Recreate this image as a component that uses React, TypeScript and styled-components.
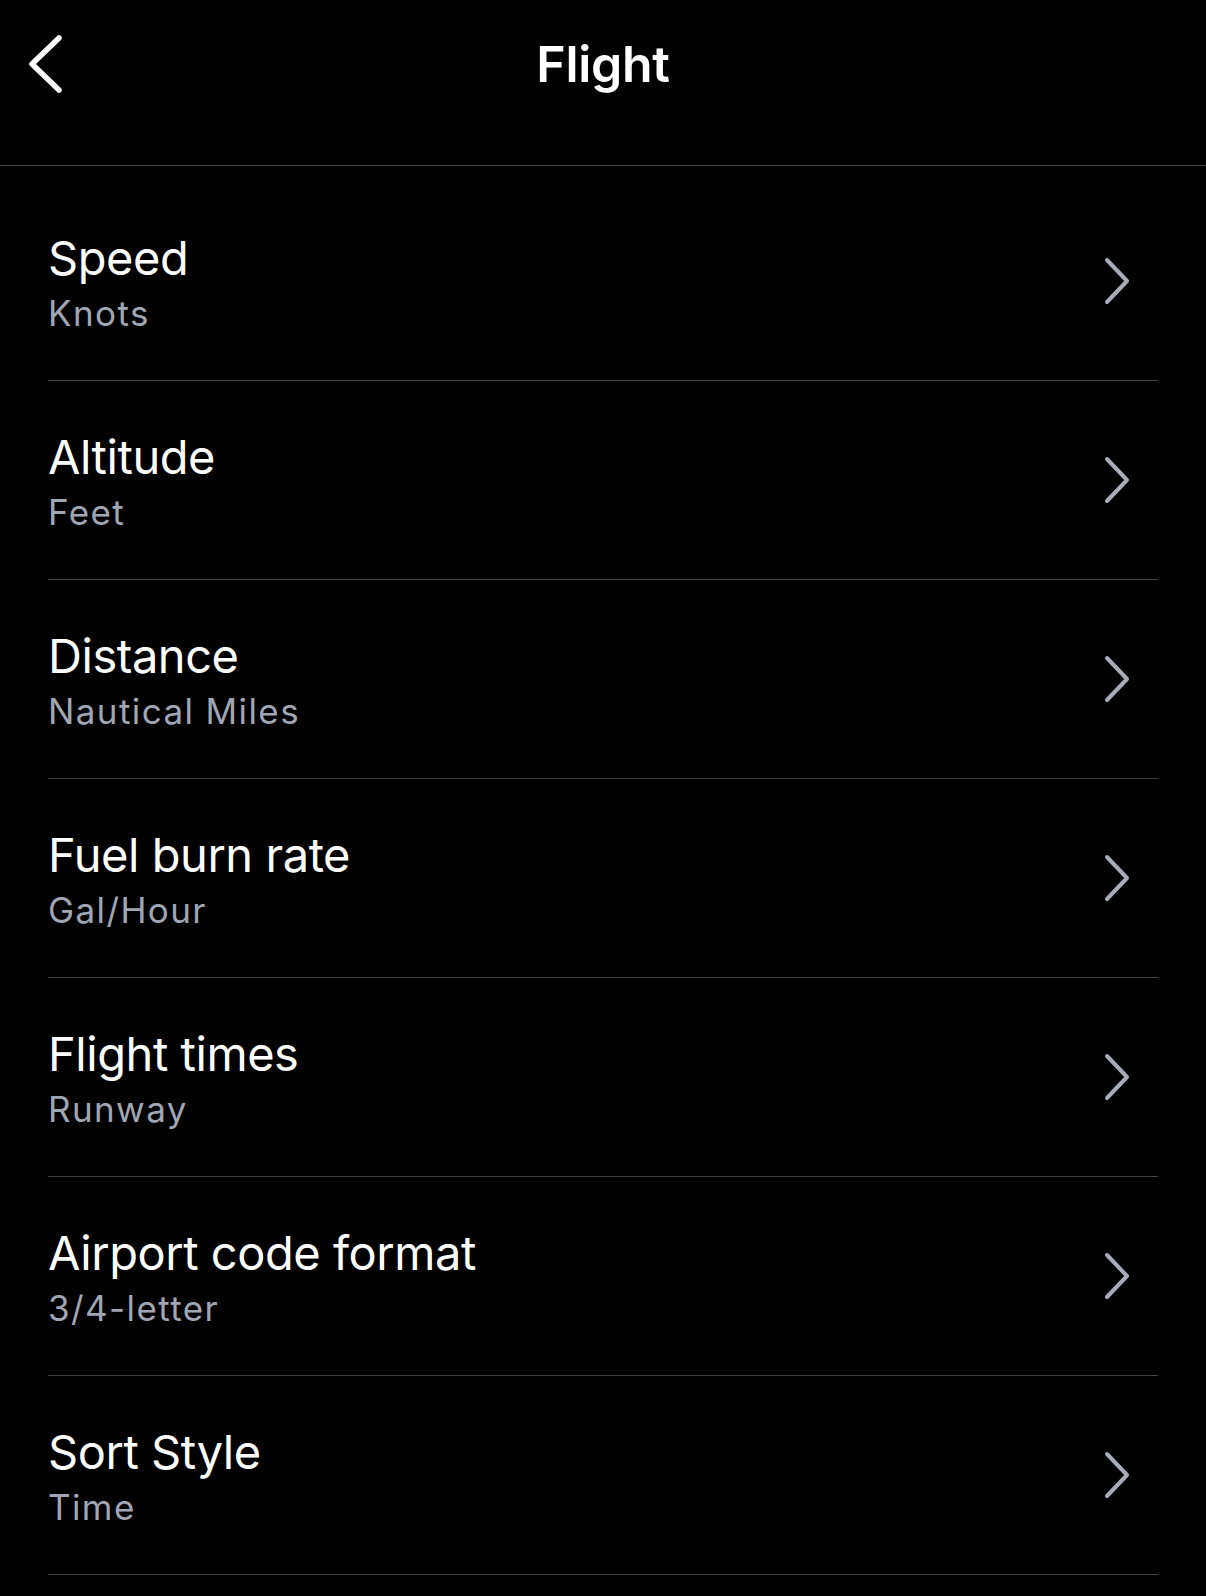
import styled, { createGlobalStyle } from 'styled-components';

const GlobalStyle = createGlobalStyle`
    html, body {
        margin: 0;
        padding: 0;
        background: #000;
    }
    body {
        font-family: Inter, "Noto Sans", "Liberation Sans", sans-serif;
        color: #fff;
        -webkit-font-smoothing: antialiased;
    }
`;

const Page = styled.div`
    width: 1206px;
    min-height: 1596px;
    background: #000;
    display: flex;
    flex-direction: column;
`;

const NavBar = styled.header`
    height: 165px;
    display: grid;
    grid-template-columns: 120px 1fr 120px;
    align-items: start;
    border-bottom: 1px solid #444449;
`;

const BackButton = styled.button`
    background: none;
    border: 0;
    padding: 0;
    margin: 33px 0 0 25px;
    width: 40px;
    height: 62px;
    display: flex;
    align-items: center;
    justify-content: center;
    cursor: pointer;
`;

const Title = styled.h1`
    margin: 33px 0 0;
    text-align: center;
    font-size: 50px;
    line-height: 62px;
    font-weight: 600;
    letter-spacing: -0.3px;
`;

const List = styled.ul`
    list-style: none;
    margin: 0;
    padding: 16px 48px 0;
`;

const Row = styled.li`
    height: 198px;
    display: flex;
    align-items: center;
    justify-content: space-between;
    border-bottom: 1px solid #3d3d42;
`;

const Labels = styled.div`
    display: flex;
    flex-direction: column;
    padding-top: 2px;
`;

const Label = styled.span`
    font-size: 47px;
    line-height: 56px;
    font-weight: 400;
    letter-spacing: -0.45px;
`;

const Value = styled.span`
    margin-top: 5px;
    font-size: 35px;
    line-height: 44px;
    letter-spacing: 1.4px;
    color: #a1a6b3;
`;

const Chevron = styled.svg`
    margin-right: 26px;
    flex-shrink: 0;
`;

const settings = [
    { label: 'Speed', value: 'Knots' },
    { label: 'Altitude', value: 'Feet' },
    { label: 'Distance', value: 'Nautical Miles' },
    { label: 'Fuel burn rate', value: 'Gal/Hour' },
    { label: 'Flight times', value: 'Runway' },
    { label: 'Airport code format', value: '3/4-letter' },
    { label: 'Sort Style', value: 'Time' },
];

const App = () => (
    <Page>
        <GlobalStyle />
        <NavBar>
            <BackButton aria-label="Back">
                <svg width="40" height="62" viewBox="0 0 40 62">
                    <path d="M34 5 L7 31 L34 57" fill="none" stroke="#fff" strokeWidth="5.5" strokeLinecap="round" strokeLinejoin="round" />
                </svg>
            </BackButton>
            <Title>Flight</Title>
        </NavBar>
        <List>
            {settings.map(item => (
                <Row key={item.label}>
                    <Labels>
                        <Label>{item.label}</Label>
                        <Value>{item.value}</Value>
                    </Labels>
                    <Chevron width="30" height="48" viewBox="0 0 30 48">
                        <path d="M5 3 L25 24 L5 45" fill="none" stroke="#a7acb8" strokeWidth="4" strokeLinecap="round" strokeLinejoin="round" />
                    </Chevron>
                </Row>
            ))}
        </List>
    </Page>
);

export default App;
